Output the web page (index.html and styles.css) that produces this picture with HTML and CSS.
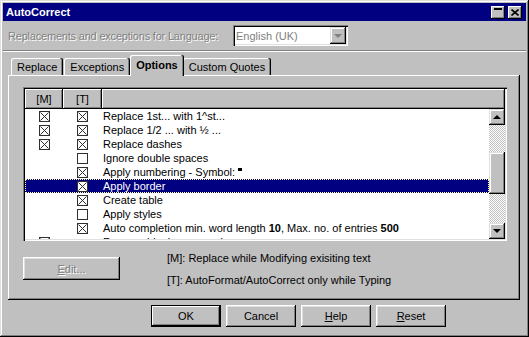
FILE: index.html
```html
<!DOCTYPE html>
<html lang="en">
<head>
    <meta charset="UTF-8">
    <title>AutoCorrect</title>
    <link rel="stylesheet" href="styles.css">
</head>
<body>
    <div class="window">
        <!-- Title bar -->
        <div class="titlebar">
            <span class="title">AutoCorrect</span>
            <div class="title-buttons">
                <span class="tb-btn"><span class="shade-glyph"></span></span>
                <span class="tb-btn">
                    <svg width="8" height="7" viewBox="0 0 8 7"><path d="M0.5 0.5 L7.5 6.5 M7.5 0.5 L0.5 6.5" stroke="#000" stroke-width="1.6"/></svg>
                </span>
            </div>
        </div>

        <!-- Language row -->
        <div class="lang-row">
            <span class="disabled-label">Replacements and exceptions for Language:</span>
            <div class="combo">
                <span class="combo-text">English (UK)</span>
                <span class="combo-btn"><span class="arrow-down grey"></span></span>
            </div>
        </div>
        <div class="separator"></div>

        <div class="dialog-body">
            <!-- Tabs -->
            <div class="tabs">
                <span class="tab">Replace</span>
                <span class="tab">Exceptions</span>
                <span class="tab active">Options</span>
                <span class="tab">Custom Quotes</span>
            </div>

            <div class="panel">
                <div class="listbox">
                    <div class="list-header">
                        <span class="hcell">[M]</span>
                        <span class="hcell">[T]</span>
                        <span class="hcell"></span>
                    </div>
                    <div class="list-body">
                        <div class="rows">
                            <div class="row"><span class="col"><i class="cb x"></i></span><span class="col"><i class="cb x"></i></span><span class="label">Replace 1st... with 1^st...</span></div>
                            <div class="row"><span class="col"><i class="cb x"></i></span><span class="col"><i class="cb x"></i></span><span class="label">Replace 1/2 ... with ½ ...</span></div>
                            <div class="row"><span class="col"><i class="cb x"></i></span><span class="col"><i class="cb x"></i></span><span class="label">Replace dashes</span></div>
                            <div class="row"><span class="col"></span><span class="col"><i class="cb"></i></span><span class="label">Ignore double spaces</span></div>
                            <div class="row"><span class="col"></span><span class="col"><i class="cb x"></i></span><span class="label">Apply numbering - Symbol: <span class="bullet"></span></span></div>
                            <div class="row selected"><span class="col"></span><span class="col"><i class="cb x"></i></span><span class="label">Apply border</span></div>
                            <div class="row"><span class="col"></span><span class="col"><i class="cb x"></i></span><span class="label">Create table</span></div>
                            <div class="row"><span class="col"></span><span class="col"><i class="cb"></i></span><span class="label">Apply styles</span></div>
                            <div class="row"><span class="col"></span><span class="col"><i class="cb x"></i></span><span class="label">Auto completion min. word length <b>10</b>, Max. no. of entries <b>500</b></span></div>
                            <div class="row"><span class="col"><i class="cb x"></i></span><span class="col"></span><span class="label">Remove blank paragraphs</span></div>
                        </div>
                        <div class="scrollbar">
                            <span class="sb-btn"><span class="arrow-up"></span></span>
                            <div class="sb-track"><span class="sb-thumb"></span></div>
                            <span class="sb-btn"><span class="arrow-down"></span></span>
                        </div>
                    </div>
                </div>

                <div class="panel-footer">
                    <span class="btn edit-btn disabled"><u>E</u>dit...</span>
                    <div class="legend">
                        <p>[M]: Replace while Modifying exisiting text</p>
                        <p>[T]: AutoFormat/AutoCorrect only while Typing</p>
                    </div>
                </div>
            </div>

            <!-- Dialog buttons -->
            <div class="buttons">
                <span class="btn default">OK</span>
                <span class="btn">Cancel</span>
                <span class="btn"><u>H</u>elp</span>
                <span class="btn"><u>R</u>eset</span>
            </div>
        </div>
    </div>

    <script>
        // draw the X inside every checked box
        document.querySelectorAll('.cb').forEach(function (box) {
            var lines = box.classList.contains('x')
                ? '<path d="M1.5 1.5 L9.5 9.5 M9.5 1.5 L1.5 9.5" stroke="#303030" stroke-width="1"/>'
                : '';
            box.innerHTML = '<svg width="11" height="11" viewBox="0 0 11 11">' +
                '<rect x="0.5" y="0.5" width="10" height="10" fill="#fff" stroke="#303030"/>' +
                lines + '</svg>';
        });
    </script>
</body>
</html>
```

FILE: styles.css
```css
/* Global */
* {
    box-sizing: border-box;
}

body {
    margin: 0;
    font-family: "Liberation Sans", Arial, sans-serif;
    font-size: 11px;
    color: #000;
    background: #c0c0c0;
}

p {
    margin: 0;
}

/* Window frame */
.window {
    width: 529px;
    height: 337px;
    padding: 3px;
    background: #c0c0c0;
    display: flex;
    flex-direction: column;
    box-shadow: inset -1px -1px #000, inset 1px 1px #dfdfdf, inset -2px -2px #808080, inset 2px 2px #fff;
}

.titlebar {
    height: 18px;
    flex-shrink: 0;
    background: #000080;
    color: #fff;
    font-weight: bold;
    display: flex;
    align-items: center;
    justify-content: space-between;
    padding: 0 4px 0 3px;
}

.title-buttons {
    display: flex;
    gap: 3px;
}

.tb-btn {
    width: 14px;
    height: 13px;
    background: #c0c0c0;
    display: flex;
    align-items: center;
    justify-content: center;
    box-shadow: inset -1px -1px #000, inset 1px 1px #fff, inset -2px -2px #808080;
}

.shade-glyph {
    width: 8px;
    height: 2px;
    background: #000;
    margin-bottom: 6px;
}

/* Language row */
.lang-row {
    display: flex;
    align-items: center;
    height: 21px;
    margin-top: 4px;
    padding-left: 5px;
}

.disabled-label {
    width: 225px;
    color: #808080;
    text-shadow: 1px 1px #fff;
    letter-spacing: -0.2px;
}

.combo {
    width: 115px;
    height: 21px;
    background: #fff;
    padding: 2px;
    display: flex;
    align-items: center;
    justify-content: space-between;
    box-shadow: inset 1px 1px #808080, inset 2px 2px #000, inset -1px -1px #fff, inset -2px -2px #dfdfdf;
}

.combo-text {
    color: #808080;
    padding-left: 1px;
}

.combo-btn {
    width: 16px;
    height: 17px;
    background: #c0c0c0;
    display: flex;
    align-items: center;
    justify-content: center;
    box-shadow: inset -1px -1px #000, inset 1px 1px #dfdfdf, inset -2px -2px #808080, inset 2px 2px #fff;
}

.separator {
    height: 2px;
    margin-top: 4px;
    border-top: 1px solid #808080;
    border-bottom: 1px solid #fff;
}

/* Tabs */
.dialog-body {
    padding: 0 6px 0 5px;
}

.tabs {
    display: flex;
    align-items: flex-end;
    height: 23px;
    padding-left: 3px;
}

.tab {
    height: 17px;
    padding: 0 6px;
    margin-right: 1px;
    display: flex;
    align-items: center;
    border-radius: 2px 2px 0 0;
    box-shadow: inset -1px 0 #000, inset -2px 0 #808080, inset 1px 1px #fff;
}

.tab.active {
    height: 21px;
    margin-bottom: -1px;
    margin-left: -1px;
    margin-right: -1px;
    padding: 0 6px 2px;
    font-weight: bold;
    background: #c0c0c0;
    position: relative;
    z-index: 1;
}

.panel {
    height: 225px;
    padding: 12px 13px 0 15px;
    box-shadow: inset -1px -1px #000, inset 1px 1px #fff, inset -2px -2px #808080;
}

/* List box */
.listbox {
    height: 154px;
    padding: 2px;
    background: #fff;
    box-shadow: inset 1px 1px #808080, inset 2px 2px #000, inset -1px -1px #fff, inset -2px -2px #dfdfdf;
}

.list-header {
    display: grid;
    grid-template-columns: 38px 39px 1fr;
    height: 20px;
    background: #c0c0c0;
}

.hcell {
    display: flex;
    align-items: center;
    justify-content: center;
    box-shadow: inset -1px -1px #000, inset 1px 1px #fff, inset -2px -2px #808080;
}

.list-body {
    display: flex;
    height: 130px;
}

.rows {
    flex: 1;
    overflow: hidden;
}

.row {
    display: grid;
    grid-template-columns: 38px 39px 1fr;
    height: 14px;
    align-items: center;
}

.row .col {
    display: flex;
    justify-content: center;
    align-items: center;
    height: 14px;
}

.row .label {
    padding-left: 1px;
    white-space: nowrap;
}

.row.selected {
    background: #000080;
    color: #fff;
    outline: 1px dotted #ffffa0;
    outline-offset: -1px;
}

.cb {
    display: block;
    width: 11px;
    height: 11px;
}

.cb svg {
    display: block;
}

.bullet {
    display: inline-block;
    width: 4px;
    height: 3px;
    background: #000;
    vertical-align: 5px;
}

/* Scrollbar */
.scrollbar {
    width: 16px;
    display: flex;
    flex-direction: column;
}

.sb-btn {
    height: 16px;
    background: #c0c0c0;
    display: flex;
    align-items: center;
    justify-content: center;
    box-shadow: inset -1px -1px #000, inset 1px 1px #dfdfdf, inset -2px -2px #808080, inset 2px 2px #fff;
}

.sb-track {
    flex: 1;
    padding-top: 27px;
    background: repeating-conic-gradient(#fff 0 25%, #c0c0c0 0 50%) 0 0 / 2px 2px;
}

.sb-thumb {
    display: block;
    height: 42px;
    background: #c0c0c0;
    box-shadow: inset -1px -1px #000, inset 1px 1px #dfdfdf, inset -2px -2px #808080, inset 2px 2px #fff;
}

.arrow-up,
.arrow-down {
    width: 0;
    height: 0;
    border-left: 4px solid transparent;
    border-right: 4px solid transparent;
}

.arrow-up {
    border-bottom: 4px solid #000;
}

.arrow-down {
    border-top: 4px solid #000;
}

.arrow-down.grey {
    border-top-color: #808080;
}

/* Panel footer */
.panel-footer {
    display: flex;
    align-items: flex-start;
}

.btn {
    width: 70px;
    height: 22px;
    display: flex;
    align-items: center;
    justify-content: center;
    background: #c0c0c0;
    box-shadow: inset -1px -1px #000, inset 1px 1px #fff, inset -2px -2px #808080, inset 2px 2px #dfdfdf;
}

.btn.default {
    box-shadow: inset 0 0 0 1px #000, inset -2px -2px #000, inset 2px 2px #fff, inset -3px -3px #808080;
}

.btn.disabled {
    color: #808080;
    text-shadow: 1px 1px #fff;
}

.edit-btn {
    width: 97px;
    height: 23px;
    margin-top: 16px;
}

.legend {
    margin-left: 47px;
    margin-top: 11px;
    display: flex;
    flex-direction: column;
    gap: 9px;
    line-height: 13px;
}

/* Dialog buttons */
.buttons {
    display: flex;
    gap: 5px;
    margin-top: 5px;
    padding-left: 143px;
}
```
